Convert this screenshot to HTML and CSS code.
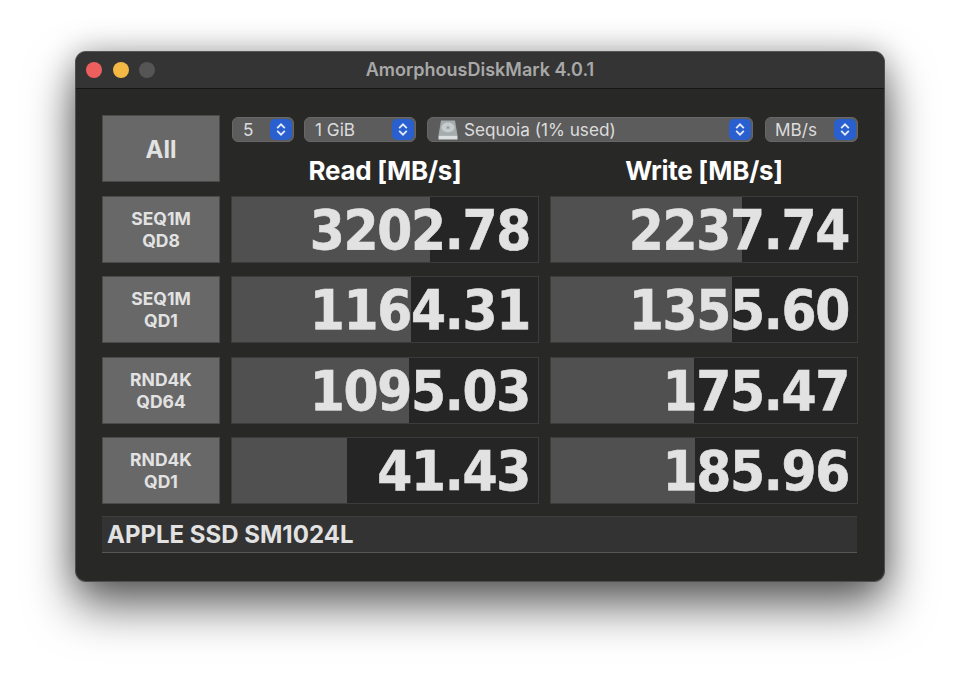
FILE: index.html
```html
<!DOCTYPE html>
<html lang="en">
<head>
  <meta charset="UTF-8">
  <title>AmorphousDiskMark</title>
  <link rel="stylesheet" href="styles.css">
</head>
<body>
  <div class="window">
    <div class="titlebar">
      <span class="light red"></span>
      <span class="light yellow"></span>
      <span class="light off"></span>
      <div class="title">AmorphousDiskMark 4.0.1</div>
    </div>

    <div class="content">
      <div class="board">
        <button class="test-btn all">All</button>

        <div class="controls">
          <div class="select s-count"><span>5</span><i class="stepper"><svg viewBox="0 0 22 22"><path d="M7 9.5 11 5.5 15 9.5M7 12.5 11 16.5 15 12.5"/></svg></i></div>
          <div class="select s-size"><span>1 GiB</span><i class="stepper"><svg viewBox="0 0 22 22"><path d="M7 9.5 11 5.5 15 9.5M7 12.5 11 16.5 15 12.5"/></svg></i></div>
          <div class="select s-disk">
            <svg class="disk" viewBox="0 0 20 20">
              <path class="disk-top" d="M3 .5h14l2.500 15H.5z"/>
              <ellipse class="disk-plate" cx="10" cy="7.5" rx="6.5" ry="5"/>
              <circle class="disk-hub" cx="10" cy="7.5" r="1.5"/>
              <path class="disk-side" d="M.5 15.500h19v4H.5z"/>
            </svg>
            <span>Sequoia (1% used)</span>
            <i class="stepper"><svg viewBox="0 0 22 22"><path d="M7 9.5 11 5.5 15 9.5M7 12.5 11 16.5 15 12.5"/></svg></i>
          </div>
          <div class="select s-unit"><span>MB/s</span><i class="stepper"><svg viewBox="0 0 22 22"><path d="M7 9.5 11 5.5 15 9.5M7 12.5 11 16.5 15 12.5"/></svg></i></div>
        </div>

        <div class="heading">Read [MB/s]</div>
        <div class="heading">Write [MB/s]</div>

        <button class="test-btn">SEQ1M<br>QD8</button>
        <div class="cell"><div class="bar" style="width: 198px"></div><span class="value">3202.78</span></div>
        <div class="cell"><div class="bar" style="width: 191px"></div><span class="value">2237.74</span></div>

        <button class="test-btn">SEQ1M<br>QD1</button>
        <div class="cell"><div class="bar" style="width: 179px"></div><span class="value">1164.31</span></div>
        <div class="cell"><div class="bar" style="width: 181px"></div><span class="value">1355.60</span></div>

        <button class="test-btn">RND4K<br>QD64</button>
        <div class="cell"><div class="bar" style="width: 177px"></div><span class="value">1095.03</span></div>
        <div class="cell"><div class="bar" style="width: 143px"></div><span class="value">175.47</span></div>

        <button class="test-btn">RND4K<br>QD1</button>
        <div class="cell"><div class="bar" style="width: 115px"></div><span class="value">41.43</span></div>
        <div class="cell"><div class="bar" style="width: 144px"></div><span class="value">185.96</span></div>
      </div>

      <div class="comment">APPLE SSD SM1024L</div>
    </div>
  </div>
</body>
</html>
```

FILE: styles.css
```css
/* page */
html, body {
  height: 100%;
}

body {
  margin: 0;
  padding: 51px 75px 0;
  box-sizing: border-box;
  background-color: #fff;
  overflow: hidden;
  font-family: Inter, "Liberation Sans", sans-serif;
}

.window {
  width: 810px;
  height: 531px;
  box-sizing: border-box;
  background-color: #282827;
  border: 1px solid #4e4e4e;
  border-top-color: #555;
  border-radius: 11px;
  box-shadow: 0 24px 48px rgba(0, 0, 0, 0.6), 0 0 30px rgba(0, 0, 0, 0.25);
  display: flex;
  flex-direction: column;
  overflow: hidden;
}

/* title bar */
.titlebar {
  position: relative;
  height: 36px;
  flex-shrink: 0;
  display: flex;
  align-items: center;
  gap: 10.5px;
  padding-left: 10px;
  background-color: #343434;
  border-bottom: 1px solid #161616;
}

.light {
  width: 16px;
  height: 16px;
  border-radius: 50%;
}

.light.red { background-color: #ec5f5d; }
.light.yellow { background-color: #f4b944; }
.light.off { background-color: #555; }

.title {
  position: absolute;
  left: 0;
  right: 0;
  margin-top: -2px;
  text-align: center;
  color: #a8a8a8;
  font-size: 18px;
  font-weight: 600;
}

/* main grid */
.content {
  padding: 26px 27px 0 26px;
}

.board {
  display: grid;
  grid-template-columns: 118px 308px 308px;
  grid-template-rows: 25px 28.5px repeat(4, 67px);
  column-gap: 11px;
  row-gap: 13.5px;
}

.test-btn {
  margin: 0;
  padding: 1px 0 0;
  border: 1px solid #4a4a4a;
  background-color: #686868;
  color: #e2e2e2;
  font-family: inherit;
  font-size: 17.5px;
  font-weight: 700;
  line-height: 22px;
}

.test-btn.all {
  grid-row: 1 / 3;
  padding-top: 2px;
  font-size: 24px;
}

.controls {
  grid-column: 2 / 4;
  display: flex;
  padding: 2px 0 0 1px;
}

.select {
  height: 25px;
  box-sizing: border-box;
  display: flex;
  align-items: center;
  border: 1px solid #676767;
  border-radius: 6px;
  background-color: #5c5c5c;
  color: #dcdcdc;
  font-size: 17.2px;
  padding: 0 1px 0 10px;
}

.select span {
  flex-grow: 1;
}

.s-count { width: 62px; }
.s-size { width: 112px; margin-left: 10px; }
.s-disk { width: 326px; margin-left: 11px; }
.s-unit { width: 93px; margin-left: 12px; padding-left: 9px; }

.stepper {
  width: 22px;
  height: 21px;
  border-radius: 5px;
  background-color: #2a5fd0;
  flex-shrink: 0;
}

.stepper svg {
  display: block;
  width: 22px;
  height: 21px;
  fill: none;
  stroke: #e4ebf8;
  stroke-width: 1.9;
}

.disk {
  width: 20px;
  height: 20px;
  margin-right: 6px;
  flex-shrink: 0;
}

.disk-top { fill: #a4acac; }
.disk-plate { fill: #c6cccc; }
.disk-hub { fill: #9aa2a2; }
.disk-side { fill: #dcdfdf; }

.heading {
  padding-top: 2px;
  color: #fff;
  font-size: 26px;
  font-weight: 700;
  line-height: 30px;
  text-align: center;
  letter-spacing: -0.3px;
}

.cell {
  position: relative;
  box-sizing: border-box;
  border: 1px solid #3c3c3c;
  background-color: #252525;
  text-align: right;
}

.bar {
  position: absolute;
  left: 0;
  top: 0;
  bottom: 0;
  background-color: #505050;
}

.value {
  position: relative;
  display: block;
  padding-right: 8px;
  color: #e2e2e2;
  -webkit-text-stroke: 0.6px #e2e2e2;
  font-family: "DejaVu Sans Condensed", "DejaVu Sans", sans-serif;
  font-size: 56px;
  font-weight: 700;
  line-height: 65px;
  letter-spacing: -1.3px;
}

.comment {
  margin-top: 12px;
  width: 755px;
  height: 37px;
  box-sizing: border-box;
  padding-left: 5px;
  background-color: #333;
  border-top: 1px solid #3f3f3f;
  border-bottom: 1px solid #555;
  color: #e2e2e2;
  font-size: 24px;
  font-weight: 700;
  line-height: 35px;
}
```
